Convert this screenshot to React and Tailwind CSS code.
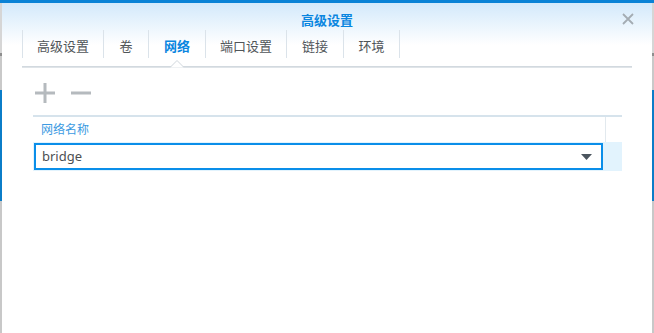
const tabs = [
  { label: '高级设置', w: 'w-[81px]' },
  { label: '卷', w: 'w-[45px]' },
  { label: '网络', w: 'w-[57px]', active: true },
  { label: '端口设置', w: 'w-[81px]' },
  { label: '链接', w: 'w-[57px]' },
  { label: '环境', w: 'w-[57px]' },
];

const font = { fontFamily: '"Noto Sans", "Noto Sans CJK SC", sans-serif' };

const EdgeStrip = () => (
  <div className="w-[2px] flex flex-col">
    <div className="h-[50px] bg-[#d6d6d6]" />
    <div className="h-[3px] bg-[#8e8e8e]" />
    <div className="h-[34px] bg-[#c9c9c9]" />
    <div className="h-[111px] bg-[#0b7dc8]" />
    <div className="flex-1 bg-[#c8c8c8]" />
  </div>
);

export default function App() {
  return (
    <div className="w-[654px] h-[333px] flex flex-col overflow-hidden bg-white" style={font}>
      <div className="h-[3px] bg-[#0a82d6]" />
      <div className="flex flex-1">
        <EdgeStrip />

        <div className="flex-1 flex flex-col bg-[linear-gradient(to_bottom,#d3e9fb_0px,#ffffff_42px)]">
          {/* header */}
          <div className="h-[27px] relative flex justify-center">
            <span className="mt-[10px] leading-[14px] text-[13px] font-bold text-[#0a86e0]">高级设置</span>
            <svg className="absolute right-[18px] top-[10px]" width="12" height="12" viewBox="0 0 12 12">
              <path d="M1 1 L11 11 M11 1 L1 11" stroke="#a4acb3" strokeWidth="1.8" />
            </svg>
          </div>

          {/* tabs */}
          <div className="flex ml-[20px] h-[28px]">
            {tabs.map((t, i) => (
              <div
                key={t.label}
                className={`${t.w} flex items-center justify-center pt-[6px] border-l border-[#dbe3ea] text-[13px] ${
                  i === tabs.length - 1 ? 'border-r' : ''
                } ${t.active ? 'text-[#0a86e0] font-bold' : 'text-[#505559]'}`}
              >
                {t.label}
              </div>
            ))}
          </div>
          <div className="relative mx-[20px] mt-[8px] h-[2px] bg-[#dfe4e8] border-t border-[#d2d9df]">
            <svg className="absolute left-[148px] top-[-7px]" width="14" height="8" viewBox="0 0 14 8">
              <path d="M0 7.5 L7 0.5 L14 7.5" fill="#ffffff" stroke="#cfd6dc" strokeWidth="1" />
            </svg>
          </div>

          {/* toolbar */}
          <div className="flex items-center gap-[16px] ml-[33px] mt-[14px] h-[21px]">
            <svg width="20" height="20" viewBox="0 0 20 20">
              <rect x="8.5" y="0" width="3" height="20" fill="#b5babe" />
              <rect x="0" y="8.5" width="20" height="3" fill="#b5babe" />
            </svg>
            <svg width="20" height="20" viewBox="0 0 20 20">
              <rect x="0" y="8.5" width="20" height="3" fill="#b5babe" />
            </svg>
          </div>

          {/* grid */}
          <div className="ml-[31px] mr-[30px] mt-[12px] flex flex-col">
            <div className="flex h-[27px] border-t-2 border-[#d6e3ec]">
              <div className="flex-1 flex items-center pl-[8px] text-[12px] text-[#3c9be2]">网络名称</div>
              <div className="w-[17px] border-l border-[#e2e9ee]" />
            </div>
            <div className="flex h-[29px] bg-[#e2f3fd]">
              <div className="flex-1 py-[1px] pl-[1px]">
                <div className="h-full bg-white border-2 border-[#0a8ee9] flex items-center justify-between pl-[6px] pr-[9px]">
                  <span className="text-[13px] text-[#4c4f52]">bridge</span>
                  <svg width="11" height="6" viewBox="0 0 11 6">
                    <path d="M0 0 L11 0 L5.5 6 Z" fill="#4b555e" />
                  </svg>
                </div>
              </div>
              <div className="w-[19px]" />
            </div>
          </div>
        </div>

        <EdgeStrip />
      </div>
    </div>
  );
}
